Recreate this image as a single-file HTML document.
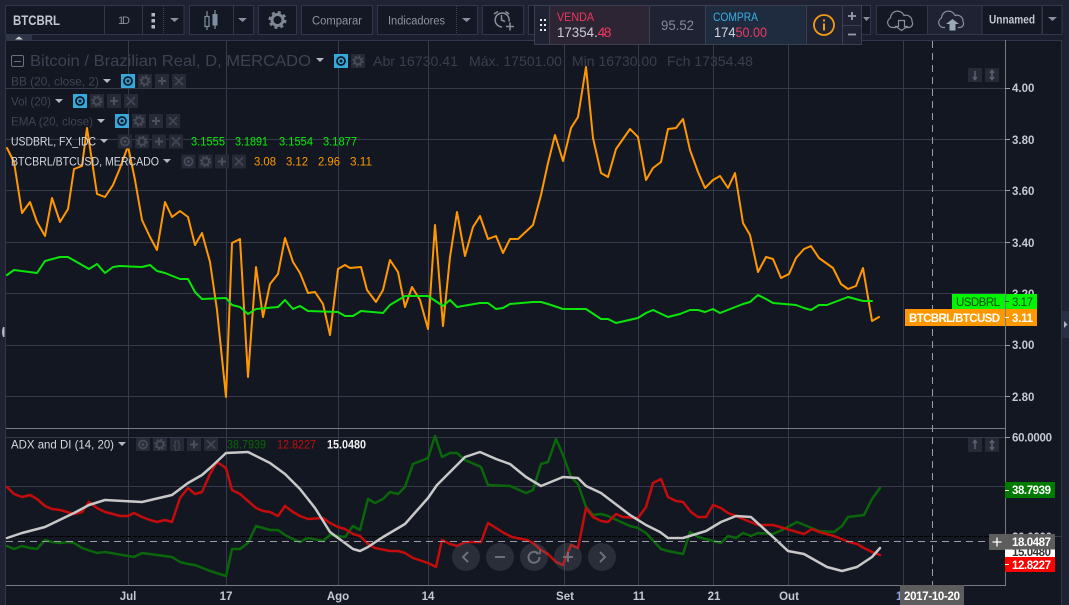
<!DOCTYPE html>
<html><head><meta charset="utf-8"><title>BTCBRL</title>
<style>
html,body{margin:0;padding:0;background:#1e2233;width:1069px;height:605px;overflow:hidden}
svg{display:block;font-family:"Liberation Sans",sans-serif}
.ax{font-size:11.5px;font-weight:bold;fill:#c5c8d0}
.lg{font-size:12px;fill:#3f4454}
.ln{fill:none;stroke-linejoin:round;stroke-linecap:round}
</style></head><body>
<svg width="1069" height="605" viewBox="0 0 1069 605" xmlns="http://www.w3.org/2000/svg">
<defs>
<g id="eye"><circle cx="7" cy="7" r="4" fill="none" stroke="currentColor" stroke-width="1.8"/><circle cx="7" cy="7" r="1.5" fill="currentColor"/></g>
<g id="gear"><circle cx="7" cy="7" r="3.4" fill="none" stroke="#464b59" stroke-width="1.8"/><circle cx="7" cy="7" r="4.8" fill="none" stroke="#464b59" stroke-width="1.8" stroke-dasharray="1.9 1.9"/></g>
<g id="plus"><path d="M7 3V11M3 7H11" stroke="#4a4f5d" stroke-width="2"/></g>
<g id="cross"><path d="M3 3L11 11M11 3L3 11" stroke="#424755" stroke-width="1.6"/></g>
<path id="drop" d="M-4 -2H4L0 2Z" fill="#b4b8c2"/>
</defs>

<rect width="1069" height="605" fill="#1e2233"/>
<!-- chart bg -->
<rect x="6" y="40" width="1055" height="565" fill="#131722"/>
<rect x="5.5" y="34.500" width="1058" height="5.500" fill="#1a1e2e"/>
<rect x="5.5" y="34.500" width="26.5" height="6" fill="#2f3447"/>
<path d="M15 39.500L19 36.500L23 39.500Z" fill="#d0d3da"/>
<path d="M5.500 40.500H1061.500V605" fill="none" stroke="#32364a"/>
<path d="M5.500 40.500V605" fill="none" stroke="#32364a"/>

<!-- grid -->
<g stroke="#363a4b" stroke-width="1" fill="none">
<path d="M128.500 41V585M226.500 41V585M338.500 41V585M428.500 41V585M564.500 41V585M638.500 41V585M713.500 41V585M788.500 41V585M903.500 41V585"/>
<path d="M6 88.500H1005M6 139.500H1005M6 190.500H1005M6 242.500H1005M6 293.500H1005M6 345.500H1005M6 396.500H1005"/>
<path d="M6 437.500H1005M6 486.500H1005"/>
</g>
<path d="M6 428.500H1005" stroke="#787b84"/>
<path d="M6 585.500H1005" stroke="#787b84"/>
<path d="M1005.500 40V586" stroke="#787b84"/>
<path d="M6 536.500H1005" stroke="#000" stroke-dasharray="5 1"/>
<path d="M1005 536.500H1061" stroke="#363a4b"/>

<!-- main lines -->
<polyline class="ln" stroke="#ff9800" stroke-width="2" points="7,148 14,162 22,213 30,202 37,222 45,236 52,198 60,222 68,209 74,169 82,166 87,128 97,194 105,197 113,185 120,168 128,146 135,180 142,220 150,237 157,250 165,202 172,217 180,211 188,217 195,245 202,233 210,262 217,310 226,397 232,243 240,239 248,377 256,267 263,317 270,284 278,274 285,238 293,262 300,273 308,293 315,292 323,304 330,335 338,269 345,265 350,268 361,267 367,290 376,302 383,290 390,260 398,272 405,307 412,287 420,300 428,329 435,225 443,326 450,257 457,212 465,256 473,227 480,216 488,239 496,236 503,253 510,239 518,239 533,225 541,195 548,163 555,135 563,161 571,128 578,117 586,67 593,138 601,173 608,177 616,149 630,129 638,137 646,180 653,168 661,162 668,129 676,128 683,119 690,150 698,172 705,188 713,180 720,176 728,188 735,173 743,223 750,235 758,272 766,257 773,259 781,278 789,274 796,258 804,249 811,246 819,258 833,268 841,284 848,289 856,286 863,268 872,321 879,317"/>
<polyline class="ln" stroke="#0be50b" stroke-width="2" points="7,275 14,270 37,273 45,261 60,257 68,257 89,269 97,264 105,273 113,267 120,266 142,267 150,265 157,271 165,273 180,279 188,279 195,292 202,299 226,298 232,305 240,307 248,314 256,309 278,307 285,300 293,309 300,306 308,311 338,312 345,316 353,316 361,311 383,313 390,305 405,296 428,296 443,306 450,300 457,307 480,303 488,303 496,309 503,308 510,304 533,302 541,302 548,304 563,309 586,309 601,319 608,319 616,323 638,318 646,313 653,310 668,317 680,314 690,310 698,310 705,312 713,309 720,313 743,304 750,302 758,295 766,299 773,303 796,305 804,308 811,310 819,305 827,305 848,297 863,301 872,301"/>

<!-- ADX lines -->
<polyline class="ln" stroke="#0a660a" stroke-width="2.500" points="7,546 14,549 22,546 30,548 37,549 45,540 52,542 60,543 68,542 74,543 82,548 97,553 105,552 134,557 142,553 172,557 180,562 188,564 195,565 210,571 226,576 232,549 240,549 248,543 256,526 270,530 278,530 285,535 293,539 300,542 308,538 323,541 330,535 345,537 353,526 360,530 368,499 375,503 383,499 390,492 398,494 405,487 413,464 428,458 435,436 442,457 450,453 457,453 465,460 481,467 488,485 510,486 526,493 533,490 541,464 548,462 556,439 563,455 571,477 578,484 586,507 593,515 601,514 608,516 630,526 638,528 646,533 661,549 668,551 683,554 690,532 698,537 721,543 728,536 736,538 743,533 751,536 758,533 773,534 782,530 797,522 819,531 834,532 842,526 848,517 864,515 872,499 880,488"/>
<polyline class="ln" stroke="#c40c0c" stroke-width="2.500" points="7,487 14,494 22,497 30,495 37,499 45,506 52,509 60,510 74,514 82,512 89,502 97,508 105,512 113,514 120,516 128,516 134,513 142,517 150,520 157,522 165,520 172,522 180,498 188,488 195,494 202,492 210,474 217,462 226,468 232,490 240,494 248,501 256,508 263,511 270,512 278,516 285,506 293,512 300,516 308,519 323,518 330,523 338,527 345,529 353,534 360,536 368,544 375,548 390,551 398,551 405,553 413,558 428,563 436,567 442,540 450,544 457,546 465,542 481,542 488,523 504,533 512,537 527,540 533,543 541,550 548,554 556,562 563,565 571,545 578,548 586,508 593,517 601,521 608,522 616,514 623,517 638,518 646,507 653,483 661,479 668,497 676,501 683,502 691,512 698,517 706,517 713,505 721,508 728,513 736,516 743,519 758,525 773,525 797,532 804,534 812,529 819,532 834,536 849,542 857,544 864,548 872,552 880,555"/>
<polyline class="ln" stroke="#c8c8c8" stroke-width="2.500" points="7,538 22,533 45,527 74,513 89,505 105,500 142,502 172,495 188,483 202,475 210,468 226,453 248,452 270,463 285,474 300,489 315,508 330,532 353,549 360,551 368,547 383,537 405,524 428,498 437,485 450,472 465,457 480,452 496,459 510,464 526,477 541,486 563,477 578,478 586,486 601,493 630,515 646,525 660,532 668,538 683,538 706,531 721,522 736,516 751,517 773,537 788,551 804,554 827,567 842,571 857,567 872,557 880,548"/>

<!-- crosshair -->
<path d="M932.500 41V585" stroke="#9a9da5" stroke-dasharray="7 5"/>
<path d="M6 541.500H990" stroke="#9a9da5" stroke-dasharray="7 5"/>

<!-- legend -->
<rect x="11.500" y="55.500" width="12" height="11" rx="1.500" fill="none" stroke="#6b7080"/><path d="M14 61.500H21" stroke="#6b7080"/>
<text x="30" y="66" font-size="16" fill="#3d4253" textLength="281" lengthAdjust="spacingAndGlyphs">Bitcoin / Brazilian Real, D, MERCADO</text>
<use href="#drop" x="320" y="60"/>
<rect x="334" y="54" width="14" height="14" fill="#35a8dc"/><use href="#eye" x="334" y="54" color="#0d1a28"/>
<rect x="351" y="54" width="14" height="14" fill="#262a36"/><use href="#gear" x="351" y="54"/>
<g font-size="14" fill="#3a3f4f">
<text x="373" y="66" textLength="85" lengthAdjust="spacingAndGlyphs">Abr 16730.41</text>
<text x="469" y="66" textLength="93" lengthAdjust="spacingAndGlyphs">Máx. 17501.00</text>
<text x="572" y="66" textLength="85" lengthAdjust="spacingAndGlyphs">Min 16730.00</text>
<text x="667" y="66" textLength="86" lengthAdjust="spacingAndGlyphs">Fch 17354.48</text>
</g>

<text class="lg" x="11" y="85.500" textLength="88" lengthAdjust="spacingAndGlyphs">BB (20, close, 2)</text>
<use href="#drop" x="107" y="81"/>
<rect x="121" y="74" width="14" height="14" fill="#35a8dc"/><use href="#eye" x="121" y="74" color="#0d1a28"/>
<rect x="138" y="74" width="14" height="14" fill="#262a36"/><use href="#gear" x="138" y="74"/>
<rect x="155" y="74" width="14" height="14" fill="#262a36"/><use href="#plus" x="155" y="74"/>
<rect x="172" y="74" width="14" height="14" fill="#262a36"/><use href="#cross" x="172" y="74"/>

<text class="lg" x="11" y="105.500" textLength="40" lengthAdjust="spacingAndGlyphs">Vol (20)</text>
<use href="#drop" x="59" y="101"/>
<rect x="73" y="94" width="14" height="14" fill="#35a8dc"/><use href="#eye" x="73" y="94" color="#0d1a28"/>
<rect x="90" y="94" width="14" height="14" fill="#262a36"/><use href="#gear" x="90" y="94"/>
<rect x="107" y="94" width="14" height="14" fill="#262a36"/><use href="#plus" x="107" y="94"/>
<rect x="124" y="94" width="14" height="14" fill="#262a36"/><use href="#cross" x="124" y="94"/>

<text class="lg" x="11" y="125.500" textLength="82" lengthAdjust="spacingAndGlyphs">EMA (20, close)</text>
<use href="#drop" x="101" y="121"/>
<rect x="115" y="114" width="14" height="14" fill="#35a8dc"/><use href="#eye" x="115" y="114" color="#0d1a28"/>
<rect x="132" y="114" width="14" height="14" fill="#262a36"/><use href="#gear" x="132" y="114"/>
<rect x="149" y="114" width="14" height="14" fill="#262a36"/><use href="#plus" x="149" y="114"/>
<rect x="166" y="114" width="14" height="14" fill="#262a36"/><use href="#cross" x="166" y="114"/>

<text x="11" y="145.500" font-size="12" fill="#d6d8de" textLength="85" lengthAdjust="spacingAndGlyphs">USDBRL, FX_IDC</text>
<use href="#drop" x="104" y="141"/>
<rect x="118" y="134.500" width="14" height="14" fill="#262a36"/><use href="#eye" x="118" y="134.500" color="#464b59"/>
<rect x="135" y="134.500" width="14" height="14" fill="#262a36"/><use href="#gear" x="135" y="134.500"/>
<rect x="152" y="134.500" width="14" height="14" fill="#262a36"/><use href="#plus" x="152" y="134.500"/>
<rect x="169" y="134.500" width="14" height="14" fill="#262a36"/><use href="#cross" x="169" y="134.500"/>
<g font-size="12" fill="#00f000">
<text x="191" y="145.500" textLength="34" lengthAdjust="spacingAndGlyphs">3.1555</text>
<text x="235" y="145.500" textLength="33" lengthAdjust="spacingAndGlyphs">3.1891</text>
<text x="279" y="145.500" textLength="34" lengthAdjust="spacingAndGlyphs">3.1554</text>
<text x="323" y="145.500" textLength="34" lengthAdjust="spacingAndGlyphs">3.1877</text>
</g>

<text x="11" y="165.500" font-size="12" fill="#d6d8de" textLength="148" lengthAdjust="spacingAndGlyphs">BTCBRL/BTCUSD, MERCADO</text>
<use href="#drop" x="167" y="161"/>
<rect x="181.500" y="154.500" width="14" height="14" fill="#262a36"/><use href="#eye" x="181.500" y="154.500" color="#464b59"/>
<rect x="198.500" y="154.500" width="14" height="14" fill="#262a36"/><use href="#gear" x="198.500" y="154.500"/>
<rect x="215" y="154.500" width="14" height="14" fill="#262a36"/><use href="#plus" x="215" y="154.500"/>
<rect x="232" y="154.500" width="14" height="14" fill="#262a36"/><use href="#cross" x="232" y="154.500"/>
<g font-size="12" fill="#ff9800">
<text x="254" y="165.500" textLength="22" lengthAdjust="spacingAndGlyphs">3.08</text>
<text x="286" y="165.500" textLength="22" lengthAdjust="spacingAndGlyphs">3.12</text>
<text x="318" y="165.500" textLength="22" lengthAdjust="spacingAndGlyphs">2.96</text>
<text x="350" y="165.500" textLength="22" lengthAdjust="spacingAndGlyphs">3.11</text>
</g>

<!-- ADX legend -->
<text x="11" y="448.500" font-size="12" fill="#d6d8de" textLength="103" lengthAdjust="spacingAndGlyphs">ADX and DI (14, 20)</text>
<use href="#drop" x="122" y="444"/>
<rect x="136" y="438" width="14" height="13" fill="#262a36"/><use href="#eye" x="136" y="437.500" color="#464b59"/>
<rect x="153" y="438" width="14" height="13" fill="#262a36"/><use href="#gear" x="153" y="437.500"/>
<rect x="170" y="438" width="14" height="13" fill="#262a36"/><text x="177" y="448.500" font-size="11" fill="#464b59" text-anchor="middle">{}</text>
<rect x="187" y="438" width="14" height="13" fill="#262a36"/><use href="#plus" x="187" y="437.500"/>
<rect x="204" y="438" width="14" height="13" fill="#262a36"/><use href="#cross" x="204" y="437.500"/>
<text x="227" y="448.500" font-size="12" fill="#0a660a" textLength="39" lengthAdjust="spacingAndGlyphs">38.7939</text>
<text x="277" y="448.500" font-size="12" fill="#c40c0c" textLength="39" lengthAdjust="spacingAndGlyphs">12.8227</text>
<text x="327" y="448.500" font-size="12" font-weight="bold" fill="#f0f0f0" textLength="39" lengthAdjust="spacingAndGlyphs">15.0480</text>

<!-- pane arrows -->
<g fill="#262a36"><rect x="968" y="68" width="14" height="14"/><rect x="985" y="68" width="14" height="14"/><rect x="968" y="438" width="14" height="14"/><rect x="985" y="438" width="14" height="14"/></g>
<g stroke="#5a5f6e" stroke-width="1.500" fill="none">
<path d="M975 71V79M973 77L975 79.500L977 77"/><path d="M992 71V79M990 73L992 70.500L994 73M990 77L992 79.500L994 77"/>
<path d="M975 441V449M973 443L975 440.500L977 443"/><path d="M992 441V449M990 443L992 440.500L994 443M990 447L992 449.500L994 447"/>
</g>

<!-- navigation -->
<g fill="#6a6f7a" fill-opacity=".26"><circle cx="466" cy="557" r="14"/><circle cx="500" cy="557" r="14"/><circle cx="534" cy="557" r="14"/><circle cx="568" cy="557" r="14"/><circle cx="602" cy="557" r="14"/></g>
<g fill="none" stroke="#6b7079" stroke-width="2">
<path d="M468 552L463 557L468 562"/><path d="M495 557H505"/>
<path d="M538 553.500A5.500 5.500 0 1 0 539.500 557"/><path d="M536 553.500H540V549.500" stroke-width="1.500"/>
<path d="M568 552V562M563 557H573"/><path d="M600 552L605 557L600 562"/>
</g>

<!-- price axis -->
<g stroke="#9a9da5"><path d="M1005 88.500H1010M1005 139.500H1010M1005 190.500H1010M1005 242.500H1010M1005 345.500H1010M1005 396.500H1010M1005 437.500H1010"/></g>
<g class="ax">
<text class="ax" x="1012" y="92">4.00</text><text class="ax" x="1012" y="144">3.80</text><text class="ax" x="1012" y="195">3.60</text><text class="ax" x="1012" y="247">3.40</text><text class="ax" x="1012" y="298">3.20</text><text class="ax" x="1012" y="349">3.00</text><text class="ax" x="1012" y="401">2.80</text>
<text class="ax" x="1012" y="441.500" textLength="40">60.0000</text>
<text class="ax" x="1012" y="541" textLength="40">20.0000</text>
</g>

<rect x="952" y="294" width="85" height="15" fill="#00f500"/>
<text x="956" y="306" font-size="11.500" fill="#0a4a0a" textLength="44">USDBRL</text>
<text x="1012" y="306" font-size="11.500" fill="#0a4a0a" textLength="21">3.17</text>
<rect x="905" y="309" width="132" height="17" fill="#ff9800"/>
<text x="909" y="322" font-size="11.500" font-weight="bold" fill="#fff" textLength="91">BTCBRL/BTCUSD</text>
<text x="1012" y="322" font-size="11.500" font-weight="bold" fill="#fff" textLength="21">3.11</text>
<path d="M1005.500 294V326" stroke="#787b84"/>
<path d="M1005 301.500H1009" stroke="#0a4a0a"/><path d="M1005 317.500H1009" stroke="#fff"/>

<rect x="1005" y="482" width="50" height="16" fill="#007a00"/>
<text x="1012" y="494" font-size="11.500" font-weight="bold" fill="#fff" textLength="39">38.7939</text>
<path d="M1005 490.500H1009" stroke="#fff"/>
<rect x="1005" y="549" width="50" height="9" fill="#fff"/>
<text x="1012" y="556" font-size="11.500" font-weight="bold" fill="#333" textLength="39">15.0480</text>
<rect x="1005" y="557" width="50" height="15" fill="#ff0000"/>
<text x="1012" y="569" font-size="11.500" font-weight="bold" fill="#fff" textLength="39">12.8227</text>
<path d="M1005 564.500H1009" stroke="#fff"/>
<rect x="1005" y="534" width="50" height="15.500" fill="#5d5d5d"/>
<text x="1012" y="546" font-size="11.500" font-weight="bold" fill="#fff" textLength="39">18.0487</text>
<rect x="989" y="534" width="16" height="16" fill="#5d5d5d"/>
<path d="M997 537.500V546.500M992.500 542H1001.500" stroke="#fff" stroke-width="1.300"/>

<!-- time axis -->
<text class="ax" x="128" y="600" text-anchor="middle">Jul</text>
<text class="ax" x="226" y="600" text-anchor="middle">17</text>
<text class="ax" x="338" y="600" text-anchor="middle">Ago</text>
<text class="ax" x="428" y="600" text-anchor="middle">14</text>
<text class="ax" x="565" y="600" text-anchor="middle">Set</text>
<text class="ax" x="639" y="600" text-anchor="middle">11</text>
<text class="ax" x="714" y="600" text-anchor="middle">21</text>
<text class="ax" x="789" y="600" text-anchor="middle">Out</text>
<text x="896" y="600" font-size="11.500" font-weight="bold" fill="#8fa8e0">1</text>
<rect x="900" y="585" width="64" height="20" fill="#5d5d5d"/>
<text x="904" y="600" font-size="11.500" font-weight="bold" fill="#fff" textLength="56">2017-10-20</text>

<!-- edge handles -->
<path d="M3 327Q1 332 3 337L4.500 337V327Z" fill="#b8bcc4"/>
<rect x="1062" y="311" width="7" height="27" fill="#2a2f42"/>
<path d="M1064 321L1067.500 324.500L1064 328Z" fill="#b0b4bc"/>

<!-- toolbar -->
<g fill="#141824" stroke="#32364a">
<rect x="5.500" y="5.500" width="178.500" height="29"/>
<rect x="189.500" y="5.500" width="64" height="29"/>
<rect x="258.500" y="5.500" width="38" height="29"/>
<rect x="301.500" y="5.500" width="71" height="29"/>
<rect x="377.500" y="5.500" width="100" height="29"/>
<rect x="482.500" y="5.500" width="41" height="29"/>
<rect x="528.500" y="5.500" width="342" height="29"/>
<rect x="876.500" y="5.500" width="51" height="29"/>
<rect x="927.500" y="5.500" width="54.500" height="29" fill="#1e2233"/>
<rect x="982" y="5.500" width="60" height="29"/>
<rect x="1042.500" y="5.500" width="19.500" height="29"/>
</g>
<g stroke="#32364a"><path d="M104.500 6V34M142.500 6V34M233.500 6V34"/></g>
<g stroke="#3e4356" stroke-dasharray="1 1"><path d="M163.500 6V34M456.500 6V34"/></g>
<text x="13" y="25" font-size="13.500" font-weight="bold" fill="#c3c7d0" textLength="47" lengthAdjust="spacingAndGlyphs">BTCBRL</text>
<text x="118" y="24" font-size="11" fill="#8a8f9e" textLength="12">1D</text>
<g fill="#b4b8c2"><rect x="151.500" y="13" width="3.500" height="3.500"/><rect x="151.500" y="19" width="3.500" height="3.500"/><rect x="151.500" y="25" width="3.500" height="3.500"/></g>
<path d="M170 18H179L174.500 22Z" fill="#8a8f9e"/>
<!-- candles icon -->
<path d="M207 11V30" stroke="#7f8fa0" stroke-width="1.200"/><rect x="205" y="16.500" width="4" height="10" fill="#141824" stroke="#7f8fa0" stroke-width="1.200"/>
<path d="M215 10V29" stroke="#7f8fa0" stroke-width="1.200"/><rect x="212.500" y="14" width="5" height="11.500" fill="#7f8fa0"/>
<path d="M238 18H247L242.500 22Z" fill="#8a8f9e"/>
<circle cx="277.500" cy="20" r="5.500" fill="none" stroke="#7f8794" stroke-width="3"/>
<circle cx="277.500" cy="20" r="7.700" fill="none" stroke="#7f8794" stroke-width="2.600" stroke-dasharray="3 3.050"/>
<text x="312" y="24.500" font-size="11.500" fill="#8d93a1" textLength="50" lengthAdjust="spacingAndGlyphs">Comparar</text>
<text x="388" y="24.500" font-size="11.500" fill="#8d93a1" textLength="57" lengthAdjust="spacingAndGlyphs">Indicadores</text>
<path d="M462 18H471L466.500 22Z" fill="#8a8f9e"/>
<!-- alarm icon -->
<g fill="none" stroke="#8a8f9e" stroke-width="1.500">
<path d="M509 21.500A7 7 0 1 0 502 27"/><path d="M501.500 15V20L505 21.500"/><path d="M494 14L498 11.500M509 14L505.500 11.500"/><path d="M510 22.500V30.500M506 26.500H514"/>
</g>

<!-- trade panel -->
<rect x="534.500" y="5.500" width="327" height="39" fill="#1e2233" stroke="#3a3f52"/>
<rect x="550" y="6" width="99" height="38" fill="#2d2533"/>
<rect x="705.500" y="6" width="100" height="38" fill="#1f2b3f"/>
<g stroke="#3a3f52"><path d="M549.500 6V44M649.500 6V44M705.500 6V44M806.500 6V44M842.500 6V44M843 25.500H861"/></g>
<g fill="#e8eaee"><rect x="540" y="19" width="2" height="2"/><rect x="544" y="19" width="2" height="2"/><rect x="540" y="24" width="2" height="2"/><rect x="544" y="24" width="2" height="2"/><rect x="540" y="29" width="2" height="2"/><rect x="544" y="29" width="2" height="2"/></g>
<text x="557" y="21" font-size="12" fill="#f0385f" textLength="37" lengthAdjust="spacingAndGlyphs">VENDA</text>
<text x="557" y="37" font-size="14" fill="#c9ccd4" textLength="37" lengthAdjust="spacingAndGlyphs">17354</text>
<text x="594" y="37" font-size="14" fill="#c9ccd4">.</text>
<text x="597.500" y="37" font-size="14" fill="#f0385f" textLength="14">48</text>
<text x="661" y="30" font-size="14" fill="#858a96" textLength="33" lengthAdjust="spacingAndGlyphs">95.52</text>
<text x="713" y="21" font-size="12" fill="#37b0e4" textLength="45" lengthAdjust="spacingAndGlyphs">COMPRA</text>
<text x="714" y="37" font-size="14" fill="#d2d5db" textLength="21.500" lengthAdjust="spacingAndGlyphs">174</text>
<text x="735.500" y="37" font-size="14" fill="#f0385f" textLength="31.500" lengthAdjust="spacingAndGlyphs">50.00</text>
<circle cx="824" cy="25" r="10" fill="none" stroke="#f39a12" stroke-width="1.800"/>
<rect x="823" y="23.500" width="2" height="7" fill="#f39a12"/><rect x="823" y="19.500" width="2" height="2" fill="#f39a12"/>
<path d="M848 16H856M852 12V20M848 34.500H856" stroke="#9a9ea9" stroke-width="1.800"/>

<!-- right toolbar icons -->
<g fill="none" stroke="#8a8f9e" stroke-width="1.200">
<path d="M896 27.500H893A5 5 0 0 1 890.500 18A7 7 0 0 1 904 15.500A6 6 0 0 1 912 21.500A4 4 0 0 1 908 27.500H905"/>
<path d="M898.500 20.500H904.500V26.500H907L901.500 30.500L896 26.500H898.500Z"/>
</g>
<path d="M945 27.500H944A5 5 0 0 1 941.500 18A7 7 0 0 1 955 15.500A6 6 0 0 1 963 21.500A4 4 0 0 1 959 27.500H958" fill="none" stroke="#8a8f9e" stroke-width="1.200"/>
<path d="M946 24L952.500 19L959 24H955.500V30.500H949.500V24Z" fill="#9aa8b8"/>
<text x="989" y="23.500" font-size="12" font-weight="bold" fill="#c3c7d0" textLength="46" lengthAdjust="spacingAndGlyphs">Unnamed</text>
<path d="M1048 17H1057L1052.500 21Z" fill="#8a8f9e"/>
<path d="M863 17H870L866.500 21Z" fill="#8a8f9e"/>
</svg>
</body></html>
